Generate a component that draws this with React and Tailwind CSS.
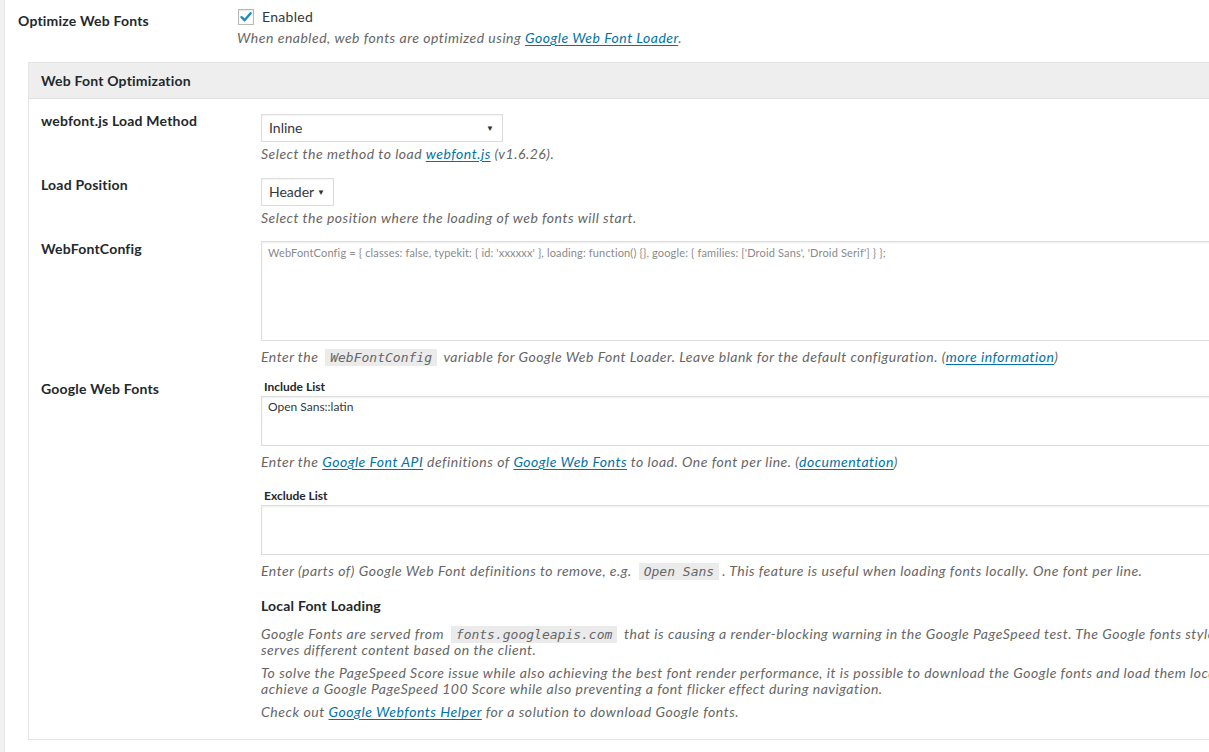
import React from 'react';

const Code = ({ children }) => (
  <code className="bg-[#ebebeb] px-[5px] py-[1px] mx-[3px] text-[13px] italic tracking-normal font-['DejaVu_Sans_Mono',monospace] text-[#666]">
    {children}
  </code>
);

const A = ({ children }) => (
  <a href="#" className="text-[#0073aa] underline underline-offset-2">
    {children}
  </a>
);

const Desc = ({ children, className = '' }) => (
  <p className={`italic text-[14px] leading-[20px] tracking-[0.5px] text-[#666] whitespace-nowrap ${className}`}>{children}</p>
);

const Select = ({ value, width }) => (
  <div className={`${width} h-[28px] border border-[#ddd] bg-white flex items-center justify-between pl-[7px] pr-[8px] text-[14px] leading-[18px] text-[#32373c] shadow-[inset_0_1px_2px_rgba(0,0,0,0.04)]`}>
    <span className="-mt-[1px]">{value}</span>
    <span className="text-[8px] text-[#333]">▼</span>
  </div>
);

const Row = ({ label, children }) => (
  <div className="flex">
    <div className="w-[220px] shrink-0 font-bold text-[14px] leading-[20px] tracking-[0.2px] text-[#23282d]">{label}</div>
    <div className="flex-1 min-w-0">{children}</div>
  </div>
);

const App = () => {
  return (
    <div className="w-[1209px] h-[752px] overflow-hidden bg-white flex font-['Lato','Noto_Sans',sans-serif] text-[#23282d]">
      <div className="w-[5px] shrink-0 bg-[#f1f1f1] border-r border-[#e8e8e8]" />
      <div className="w-[1400px] shrink-0">
        {/* top option */}
        <div className="flex pt-[7px] pl-[13px]">
          <div className="w-[219px] shrink-0 pt-[4px] font-bold text-[14px] leading-[20px] tracking-[0.2px]">Optimize Web Fonts</div>
          <div>
            <label className="flex items-center h-[20px] gap-[8px] text-[14px] tracking-[0.3px] text-[#32373c]">
              <span className="w-[16px] h-[16px] ml-[1px] border border-[#b4b9be] bg-white flex items-center justify-center shadow-[inset_0_1px_2px_rgba(0,0,0,0.1)]">
                <svg width="14" height="14" viewBox="0 0 14 14">
                  <path d="M2.5 7.2 L5.6 10.2 L11.6 3.2" fill="none" stroke="#1e8cbe" strokeWidth="2.4" strokeLinecap="round" strokeLinejoin="round" />
                </svg>
              </span>
              <span className="-mt-[1px]">Enabled</span>
            </label>
            <Desc className="mt-[1px]">
              When enabled, web fonts are optimized using <A>Google Web Font Loader</A>.
            </Desc>
          </div>
        </div>

        {/* panel */}
        <div className="ml-[23px] mt-[14px] border border-[#e5e5e5] border-r-0">
          <div className="h-[36px] bg-[#eeeeee] border-b border-[#e0e0e0] flex items-center pl-[12px] font-bold text-[14px] tracking-[0.2px]">
            Web Font Optimization
          </div>

          <div className="pl-[12px] pt-[12px] pb-[19px] flex flex-col gap-[11px]">
            <Row label="webfont.js Load Method">
              <div className="pt-[3px]">
                <Select value="Inline" width="w-[242px]" />
                <Desc className="mt-[2px]">
                  Select the method to load <A>webfont.js</A> (v1.6.26).
                </Desc>
              </div>
            </Row>

            <Row label="Load Position">
              <div className="pt-[3px]">
                <Select value="Header" width="w-[73px]" />
                <Desc className="mt-[2px]">Select the position where the loading of web fonts will start.</Desc>
              </div>
            </Row>

            <Row label="WebFontConfig">
              <div className="pt-[2px]">
                <textarea
                  readOnly
                  placeholder="WebFontConfig = { classes: false, typekit: { id: 'xxxxxx' }, loading: function() {}, google: { families: ['Droid Sans', 'Droid Serif'] } };"
                  className="block w-full h-[100px] border border-[#ddd] px-[6px] py-[3px] text-[11px] leading-[15px] text-[#32373c] placeholder:text-[#8a8a8a] resize-none outline-none shadow-[inset_0_1px_2px_rgba(0,0,0,0.07)] tracking-[0.15px]"
                />
                <Desc className="mt-[6px]">
                  Enter the <Code>WebFontConfig</Code> variable for Google Web Font Loader. Leave blank for the default configuration. (<A>more information</A>)
                </Desc>
              </div>
            </Row>

            <Row label="Google Web Fonts">
              <div>
                <div className="pl-[3px] font-bold text-[12px] leading-[16px] text-[#23282d]">Include List</div>
                <textarea
                  readOnly
                  defaultValue="Open Sans::latin"
                  className="block mt-[1px] w-full h-[50px] border border-[#ddd] px-[6px] py-[2px] text-[12px] leading-[16px] text-[#32373c] resize-none outline-none shadow-[inset_0_1px_2px_rgba(0,0,0,0.07)]"
                />
                <Desc className="mt-[6px]">
                  Enter the <A>Google Font API</A> definitions of <A>Google Web Fonts</A> to load. One font per line. (<A>documentation</A>)
                </Desc>

                <div className="mt-[16px] pl-[3px] font-bold text-[12px] leading-[16px] text-[#23282d]">Exclude List</div>
                <textarea
                  readOnly
                  className="block mt-[1px] w-full h-[50px] border border-[#ddd] px-[6px] py-[2px] text-[12px] leading-[16px] resize-none outline-none shadow-[inset_0_1px_2px_rgba(0,0,0,0.07)]"
                />
                <Desc className="mt-[6px]">
                  Enter (parts of) Google Web Font definitions to remove, e.g. <Code>Open Sans</Code>. This feature is useful when loading fonts locally. One font per line.
                </Desc>

                <div className="mt-[14px] font-bold text-[14px] leading-[20px] tracking-[0.2px] text-[#23282d]">Local Font Loading</div>
                <p className="mt-[10px] italic text-[14px] leading-[15px] tracking-[0.5px] text-[#666] whitespace-nowrap">
                  Google Fonts are served from <Code>fonts.googleapis.com</Code> that is causing a render-blocking warning in the Google PageSpeed test. The Google fonts stylesheet also
                  <br />
                  serves different content based on the client.
                </p>
                <p className="mt-[8px] italic text-[14px] leading-[16px] tracking-[0.5px] text-[#666] whitespace-nowrap">
                  To solve the PageSpeed Score issue while also achieving the best font render performance, it is possible to download the Google fonts and load them locally. This makes it possible to
                  <br />
                  achieve a Google PageSpeed 100 Score while also preventing a font flicker effect during navigation.
                </p>
                <p className="mt-[7px] italic text-[14px] leading-[16px] tracking-[0.55px] text-[#666] whitespace-nowrap">
                  Check out <A>Google Webfonts Helper</A> for a solution to download Google fonts.
                </p>
              </div>
            </Row>
          </div>
        </div>
      </div>
    </div>
  );
};

export default App;
